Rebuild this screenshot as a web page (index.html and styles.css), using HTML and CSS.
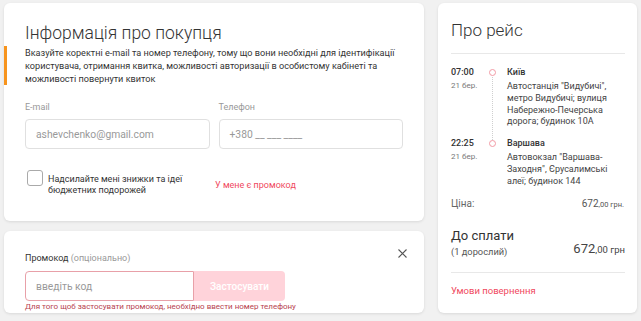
FILE: index.html
```html
<!DOCTYPE html>
<html lang="uk">
<head>
<meta charset="utf-8">
<link rel="stylesheet" href="styles.css">
</head>
<body>
<div class="page">
  <div class="left">
    <section class="card info">
      <h1 class="title">Інформація про покупця</h1>
      <p class="desc">Вказуйте коректні e-mail та номер телефону, тому що вони необхідні для ідентифікації користувача, отримання квитка, можливості авторизації в особистому кабінеті та можливості повернути квиток</p>
      <div class="fields">
        <div class="field">
          <div class="label">E-mail</div>
          <div class="input"><span class="ph">ashevchenko@gmail.com</span></div>
        </div>
        <div class="field">
          <div class="label">Телефон</div>
          <div class="input"><span class="ph">+380 __ ___ ____</span></div>
        </div>
      </div>
      <div class="opts">
        <div class="check">
          <span class="box"></span>
          <span class="check-text">Надсилайте мені знижки та ідеї<br>бюджетних подорожей</span>
        </div>
        <a class="promo-link">У мене є промокод</a>
      </div>
    </section>
    <section class="card promo">
      <div class="promo-head">
        <div class="promo-label">Промокод <span class="muted">(опціонально)</span></div>
        <svg class="close" width="9" height="9" viewBox="0 0 9 9"><path d="M0.5 0.5L8.5 8.5M8.5 0.5L0.5 8.5" stroke="#555" stroke-width="1.1" fill="none"/></svg>
      </div>
      <div class="promo-row">
        <div class="promo-input"><span class="ph">введіть код</span></div>
        <div class="promo-btn">Застосувати</div>
      </div>
      <div class="promo-err">Для того щоб застосувати промокод, необхідно ввести номер телефону</div>
    </section>
  </div>
  <aside class="card trip">
    <h2 class="title trip-title">Про рейс</h2>
    <div class="hr"></div>
    <div class="stops">
      <div class="stop first">
        <div class="time"><b>07:00</b><span>21 бер.</span></div>
        <div class="dot"><i></i></div>
        <div class="place"><b>Київ</b><span>Автостанція "Видубичі", метро Видубичі; вулиця Набережно-Печерська дорога; будинок 10А</span></div>
      </div>
      <div class="stop last">
        <div class="time"><b>22:25</b><span>21 бер.</span></div>
        <div class="dot"><i></i></div>
        <div class="place"><b>Варшава</b><span>Автовокзал "Варшава-Заходня", Єрусалимські алеї; будинок 144</span></div>
      </div>
    </div>
    <div class="price">
      <span>Ціна:</span>
      <span class="amt">672<small>,00 грн.</small></span>
    </div>
    <div class="total">
      <div class="total-l"><div class="total-t">До сплати</div><div class="total-s">(1 дорослий)</div></div>
      <div class="total-amt">672<small>,00 грн</small></div>
    </div>
    <div class="hr hr2"></div>
    <a class="refund">Умови повернення</a>
  </aside>
</div>
</body>
</html>
```
FILE: styles.css
```css
* { box-sizing: border-box; }
html, body { margin: 0; padding: 0; }
body {
  background: #f1f1f1;
  font-family: Roboto, "Noto Sans", sans-serif;
  color: #333;
  width: 641px;
  height: 321px;
  overflow: hidden;
}
.page {
  display: flex;
  gap: 14px;
  padding: 3px 4px 0 4px;
}
.left {
  width: 420px;
  display: flex;
  flex-direction: column;
  gap: 10px;
}
.card {
  background: #fff;
  border-radius: 6px;
  box-shadow: 0 1px 3px rgba(0,0,0,0.10);
}
.info {
  height: 218px;
  padding: 20px 21px 0 21px;
}
.title {
  margin: 0;
  font-weight: 300;
  font-size: 17.5px;
  line-height: 20px;
  color: #333;
}
.desc {
  margin: 3.5px 0 0 0;
  font-size: 9.15px;
  line-height: 13px;
  color: #333;
  position: relative;
}
.desc::before {
  content: "";
  position: absolute;
  left: -21px;
  top: -0.5px;
  width: 3px;
  height: 39px;
  background: #f7941d;
}
.fields {
  display: flex;
  gap: 9px;
  margin-top: 15.5px;
}
.field { width: 185px; }
.label {
  font-size: 9px;
  line-height: 12px;
  color: #999;
}
.input {
  margin-top: 6px;
  height: 30px;
  border: 1px solid #e0e0e0;
  border-radius: 4px;
  padding: 0 10px;
  display: flex;
  align-items: center;
}
.ph {
  font-size: 10.3px;
  color: #999;
}
.opts {
  display: flex;
  align-items: flex-start;
  margin-top: 21px;
}
.check {
  display: flex;
  align-items: flex-start;
  gap: 5px;
  width: 190px;
}
.box {
  width: 16px;
  height: 16px;
  border: 1px solid #aaa;
  border-radius: 3px;
  margin-left: 2px;
  flex: none;
}
.check-text {
  font-size: 9px;
  line-height: 11.5px;
  color: #333;
  margin-top: 3.5px;
}
.promo-link {
  font-size: 9px;
  line-height: 12px;
  color: #f04a5e;
  margin-top: 9px;
}
.promo {
  height: 82px;
  padding: 21px 21px 0 21px;
}
.promo-head {
  display: flex;
  justify-content: space-between;
  align-items: flex-start;
}
.promo-label {
  font-size: 9px;
  line-height: 12px;
  color: #333;
}
.muted { color: #999; }
.close { margin-right: -4px; margin-top: -3px; }
.promo-row {
  display: flex;
  margin-top: 7px;
}
.promo-input {
  width: 169px;
  height: 30px;
  border: 1px solid #e8a0a8;
  border-radius: 4px 0 0 4px;
  padding: 0 10px;
  display: flex;
  align-items: center;
}
.promo-btn {
  width: 91px;
  height: 30px;
  background: #ffd3da;
  color: #fff;
  font-size: 10px;
  font-weight: 500;
  border-radius: 0 4px 4px 0;
  display: flex;
  align-items: center;
  justify-content: center;
}
.promo-err {
  font-size: 8px;
  line-height: 10px;
  color: #b8434f;
  margin-top: 1px;
}
.trip {
  width: 199px;
  height: 310px;
  padding: 17px 12px 0 13px;
}
.trip-title { font-size: 17px; }
.hr {
  height: 1px;
  background: #e8e8e8;
  margin-top: 13px;
}
.stops { margin-top: 11px; }
.stop {
  display: flex;
  position: relative;
}
.stop.last { margin-top: 8px; }
.time {
  width: 33px;
  display: flex;
  flex-direction: column;
}
.time b {
  font-weight: 500;
  font-size: 9px;
  line-height: 14px;
}
.time span {
  font-size: 8px;
  color: #777;
  line-height: 13px;
}
.dot {
  width: 23px;
  position: relative;
}
.dot i {
  position: absolute;
  left: 5px;
  top: 4px;
  width: 7px;
  height: 7px;
  border: 1px solid #f29aa5;
  border-radius: 50%;
}
.stop.first .dot::after {
  content: "";
  position: absolute;
  left: 8px;
  top: 12px;
  bottom: -12px;
  border-left: 1px dotted #cfcfcf;
}
.place {
  flex: 1;
  display: flex;
  flex-direction: column;
}
.place b {
  font-weight: 500;
  font-size: 9px;
  line-height: 14px;
}
.place span {
  margin-top: 2px;
  font-size: 9px;
  line-height: 11.75px;
  color: #444;
}
.price {
  display: flex;
  justify-content: space-between;
  align-items: baseline;
  margin-top: 10px;
  font-size: 10px;
  line-height: 14px;
  color: #666;
  padding-right: 1px;
}
.amt { color: #555; }
.amt small { font-size: 7.5px; }
.total {
  display: flex;
  justify-content: space-between;
  align-items: center;
  margin-top: 16px;
}
.total-t {
  font-size: 13px;
  line-height: 16px;
  color: #333;
}
.total-s {
  margin-top: 2px;
  font-size: 9.3px;
  line-height: 12px;
  color: #555;
}
.total-amt {
  font-size: 13px;
  color: #444;
  line-height: 16px;
  margin-top: 12px;
}
.total-amt small { font-size: 9.5px; }
.hr2 { margin-top: 14px; }
.refund {
  display: block;
  margin-top: 12px;
  font-size: 9.5px;
  line-height: 12px;
  color: #f04a5e;
}
```
